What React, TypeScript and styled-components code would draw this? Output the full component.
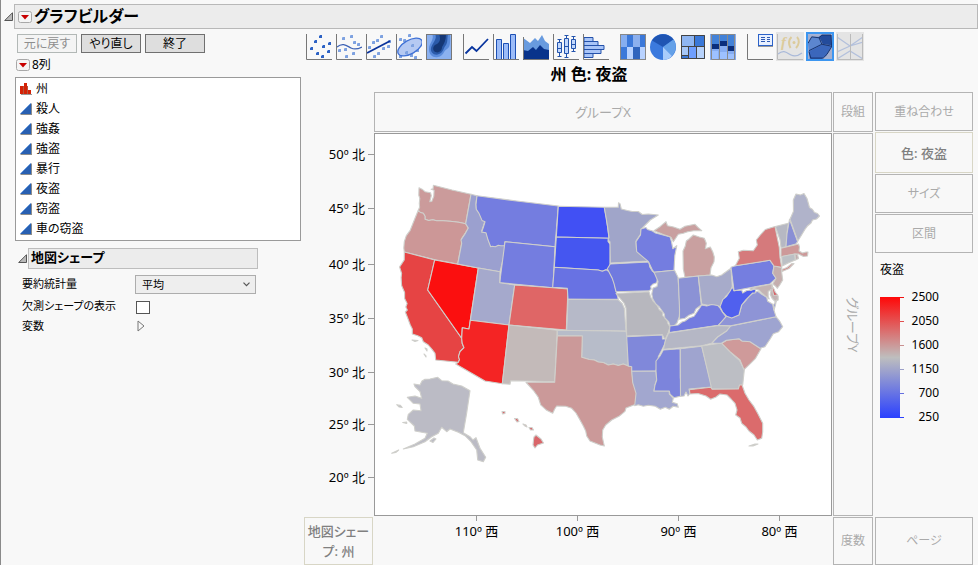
import React from "react";
import styled, { createGlobalStyle, css } from "styled-components";

const GlobalStyle = createGlobalStyle`
  *, *::before, *::after { box-sizing: border-box; }
  body {
    margin: 0;
    background: #f8f8f8;
    color: #000;
    font-family: "Noto Sans", "Noto Sans CJK JP", sans-serif;
    font-size: 12px;
    line-height: 20px;
    font-feature-settings: "palt";
  }
  button, select { font: inherit; color: inherit; font-feature-settings: inherit; }
`;

/* ---------- layout ---------- */

const Page = styled.main`
  display: flex;
  flex-direction: column;
  min-height: 100vh;
  border-left: 1px solid #8a8a8a;
  padding-top: 4px;
`;

const Header = styled.header`
  display: flex;
  align-items: center;
  gap: 1px;
  padding-left: 3px;
`;

const HeaderBar = styled.div`
  flex: 1;
  display: flex;
  align-items: center;
  gap: 2px;
  height: 25px;
  padding-left: 3px;
  background: #ececec;
  border: 1px solid #b8b8b8;
`;

const Heading = styled.h1`
  margin: 0;
  font-size: 16px;
  line-height: 20px;
  padding-bottom: 2px;
  font-weight: 700;
`;

const Body = styled.div`
  flex: 1;
  display: flex;
  gap: 3px;
  padding-right: 5px;
`;

const Sidebar = styled.aside`
  flex: 0 0 300px;
  padding: 5px 0 0 14px;
`;

const Workspace = styled.section`
  flex: 1;
  min-width: 0;
  display: flex;
  flex-direction: column;
  padding-top: 3px;
`;

/* ---------- small controls ---------- */

const IconButton = styled.button`
  display: flex;
  padding: 0;
  border: 0;
  background: none;
`;

const ActionRow = styled.div`
  display: flex;
  gap: 4px;
  padding-left: 2px;
`;

const ActionButton = styled.button`
  width: 60px;
  height: 19px;
  padding: 0;
  line-height: 15px;
  background: #dedede;
  border: 1px solid #707070;
  &:disabled {
    color: #8e8e8e;
    background: #f4f4f4;
    border-color: #b2b8b6;
  }
`;

const ColumnsRow = styled.div`
  display: flex;
  align-items: center;
  gap: 2px;
  height: 24px;
  padding-left: 1px;
`;

const ColumnList = styled.ul`
  list-style: none;
  margin: 0;
  padding: 1px 4px;
  height: 164px;
  width: 286px;
  background: #fff;
  border: 1px solid #9a9a9a;
`;

const ColumnItem = styled.li`
  display: flex;
  align-items: center;
  gap: 4px;
  height: 20px;
`;

const OutlineRow = styled.div`
  display: flex;
  align-items: center;
  gap: 1px;
  margin-top: 7px;
  padding-left: 3px;
`;

const OutlineTitle = styled.h2`
  width: 230px;
  height: 21px;
  margin: 0;
  padding-left: 2px;
  font-size: 13px;
  line-height: 17px;
  font-weight: 700;
  background: #ececec;
  border: 1px solid #bdbdbd;
`;

const Options = styled.div`
  display: grid;
  grid-template-columns: 113px 121px;
  grid-template-rows: 24px 20px 20px;
  align-items: center;
  padding: 3px 0 0 7px;
  font-size: 11px;
`;

const OptionLabel = styled.label`
  line-height: 18px;
`;

const SelectWrap = styled.div`
  display: grid;
  align-items: center;
  & > * { grid-area: 1 / 1; }
  & > svg { justify-self: end; margin-right: 6px; pointer-events: none; }
`;

const Select = styled.select`
  appearance: none;
  width: 100%;
  height: 19px;
  padding: 0 6px;
  line-height: 17px;
  background: #eee;
  border: 1px solid #adadad;
  border-radius: 0;
`;

const Checkbox = styled.input`
  appearance: none;
  width: 14px;
  height: 13px;
  margin: 2px 0 0 1px;
  background: #fff;
  border: 1px solid #555;
`;

const ToggleCell = styled.div`
  padding-left: 2px;
`;

/* ---------- toolbar ---------- */

const Toolbar = styled.div`
  display: flex;
  gap: 9px;
  height: 29px;
  padding-left: 1px;
`;

const ToolGroup = styled.div`
  display: flex;
  gap: 2px;
`;

const ToolButton = styled.button<{ $state?: "on" | "off" }>`
  display: flex;
  align-items: center;
  justify-content: center;
  width: 28px;
  height: 29px;
  padding: 0;
  border: 0;
  background: none;
  ${(p) => p.$state === "off" && css`background: #e4e4e4;`}
  ${(p) => p.$state === "on" && css`
    background: #a9b4d6;
    border: 2px solid #3d96f0;
  `}
`;

/* ---------- graph ---------- */

const GraphGrid = styled.div`
  flex: 1;
  display: grid;
  grid-template-columns: 69px minmax(0, 1fr) 41px 98px;
  grid-template-rows: 30px 40px minmax(380px, 1fr) 48px;
  gap: 1px;
`;

const GraphTitle = styled.h2`
  grid-area: 1 / 1 / 2 / 4;
  margin: 0;
  font-size: 16px;
  line-height: 27px;
  font-weight: 700;
  text-align: center;
`;

const DropZone = styled.div<{ $area?: string; $set?: boolean; $tall?: boolean; $gap?: boolean }>`
  ${(p) => p.$area && css`grid-area: ${p.$area};`}
  display: flex;
  align-items: center;
  justify-content: center;
  min-height: 39px;
  color: #aaa;
  border: 1px solid #b4b4b4;
  text-align: center;
  ${(p) => p.$gap && css`margin-right: 1px;`}
  ${(p) => p.$set && css`
    min-height: 41px;
    color: #808080;
    font-size: 13px;
    font-weight: 500;
    border-color: #d8d6c6;
  `}
  ${(p) => p.$tall && css`
    writing-mode: vertical-rl;
    text-orientation: sideways;
    font-size: 13px;
  `}
`;

const WideZone = styled(DropZone)`
  font-size: 13px;
`;

const YAxis = styled.div`
  grid-area: 3 / 1;
  display: flex;
  flex-direction: column;
  margin-right: -1px;
  font-size: 13px;
`;

const YTick = styled.div<{ $span: number }>`
  flex: ${(p) => p.$span} 0 0;
  display: flex;
  align-items: flex-end;
  justify-content: flex-end;
`;

const YLabel = styled.span`
  display: flex;
  align-items: center;
  gap: 3px;
  &::after { content: ""; width: 6px; height: 1px; background: #999; }
`;

const XAxis = styled.div`
  grid-area: 4 / 2;
  display: flex;
  margin-top: -1px;
  font-size: 13px;
`;

const XTick = styled.div<{ $span: number }>`
  flex: ${(p) => p.$span} 0 0;
  display: flex;
  flex-direction: column;
  align-items: center;
`;

const XLabel = styled.span`
  display: flex;
  flex-direction: column;
  align-items: center;
  &::before { content: ""; width: 1px; height: 5px; background: #999; }
`;

const Plot = styled.div`
  grid-area: 3 / 2;
  display: flex;
  background: #fff;
  border: 1px solid #999;
  & > svg { flex: 1; width: 100%; min-height: 0; }
`;

const SideStack = styled.div`
  grid-area: 2 / 4 / 4 / 5;
  display: flex;
  flex-direction: column;
  gap: 1px;
`;

const Legend = styled.section`
  padding: 6px 0 0 5px;
`;

const LegendTitle = styled.h3`
  margin: 0;
  font-size: 12px;
  font-weight: 400;
`;

const LegendScale = styled.div`
  display: flex;
  padding-top: 5px;
`;

const LegendBar = styled.div`
  width: 20px;
  height: 121px;
  margin-top: 12px;
  background: linear-gradient(#ff0808, #bebebe 50%, #2a40ff);
`;

const LegendLabels = styled.ol`
  list-style: none;
  margin: 0;
  padding: 0;
`;

const LegendLabel = styled.li<{ $color: string }>`
  display: flex;
  align-items: center;
  height: 24px;
  width: 39px;
  justify-content: space-between;
  font-size: 12px;
  &::before { content: ""; width: 4px; height: 1px; background: ${(p) => p.$color}; }
`;

/* ---------- icons ---------- */

const Disclosure = () => (
  <svg width="9" height="9" viewBox="0 0 9 9">
    <path d="M8.500.700v7.800H.700z" fill="#b9b9b9" stroke="#555" />
  </svg>
);

const RedTriangle = () => (
  <svg width="14" height="12" viewBox="0 0 14 12">
    <rect x=".5" y=".5" width="13" height="11" rx="2" fill="#f5f5f5" stroke="#a8a8a8" />
    <path d="M3 4h8L7 8.500z" fill="#c80000" />
  </svg>
);

const NominalIcon = () => (
  <svg width="12" height="12" viewBox="0 0 12 12">
    <path d="M1 11h11v1H1z" fill="#999" />
    <path d="M0 3h3v8H0zM4 0h3v11H4zM8 7h3v4H8z" fill="#d42207" />
    <path d="M3 3h1v8H3zM7 3h1v8H7z" fill="#b5563f" />
  </svg>
);

const ContinuousIcon = () => (
  <svg width="12" height="12" viewBox="0 0 12 12">
    <path d="M12 0v12H0z" fill="#8c8c8c" />
    <path d="M11 0v11H0z" fill="#2860b2" />
    <path d="M.5 10.500L10.500.500" stroke="#6c9ee0" />
  </svg>
);

const Icon = ({ children, axes = false }: { children?: React.ReactNode; axes?: boolean }) => (
  <svg width="26" height="26" viewBox="0 0 26 26" style={undefined}>
    {children}
    {axes && <path d="M.5 0v25.500H26" fill="none" stroke="#777" />}
  </svg>
);

const Dots = ({ at, fill }: { at: number[][]; fill: string }) => (
  <>
    {at.map(([x, y]) => (
      <g key={`${x}-${y}`}>
        <rect x={x - 1} y={y} width="3" height="3" fill={fill} />
        <rect x={x - 1} y={y} width="1" height="1" fill="#9dbbee" />
      </g>
    ))}
  </>
);

const PointsIcon = () => (
  <Icon axes>
    <Dots fill="#2d62c4" at={[[14, 1], [9, 6], [23, 8], [5, 13], [17, 11], [22, 16], [11, 18], [16, 21]]} />
  </Icon>
);

const SmootherIcon = () => (
  <Icon axes>
    <Dots fill="#7fa2e0" at={[[7, 3], [15, 1], [18, 7], [22, 9], [3, 15], [9, 14], [17, 18], [10, 21]]} />
    <path d="M1 13C7 8 11 12 15 14S22 15 26 13" fill="none" stroke="#3c61b4" strokeWidth="1.300" />
  </Icon>
);

const FitLineIcon = () => (
  <Icon axes>
    <Dots fill="#7fa2e0" at={[[15, 1], [11, 5], [7, 7], [23, 6], [3, 12], [22, 11], [17, 13], [12, 18], [8, 21]]} />
    <path d="M1 19L24 7" stroke="#0a339c" strokeWidth="1.800" />
  </Icon>
);

const EllipseIcon = () => (
  <Icon axes>
    <Dots fill="#7fa2e0" at={[[13, 0], [4, 4], [8, 5], [21, 15], [4, 21], [15, 20], [19, 22]]} />
    <ellipse cx="14" cy="13" rx="13.500" ry="6.800" transform="rotate(-30 14 13)" fill="#a9c1f1" fillOpacity=".85" stroke="#3f71d6" strokeWidth="1.300" />
    <Dots fill="#7fa2e0" at={[[16, 10], [10, 17]]} />
  </Icon>
);

const ContourIcon = () => (
  <Icon>
    <rect width="26" height="26" fill="#8bb1f0" />
    <path d="M6 0C9 5 3 9 3 15c0 6 4 9 9 8 6-1 5-6 9-8 4-2 3-9 3-15z" fill="#5a8bdb" />
    <path d="M9 0c3 5-3 9-4 14-1 5 4 8 8 6 5-2 4-6 7-9 2-3 1-7 2-11z" fill="#2b5aa9" />
    <path d="M13 0c2 5 1 8-2 10-3 1-5 4-3 7 3 3 8 1 8-4 2-3 4-7 4-13z" fill="#153775" />
    <rect x=".5" y=".5" width="25" height="25" fill="none" stroke="#777" />
  </Icon>
);

const LineIcon = () => (
  <Icon axes>
    <path d="M2.500 19.500L9 13l4.500 4L25 5" fill="none" stroke="#08349e" strokeWidth="1.800" />
  </Icon>
);

const BarIcon = () => (
  <Icon axes>
    <g fill="#9cbcf8" stroke="#1d50b4">
      <path d="M3.500 25V5.500h5V25M10.500 25V9.500h5V25M17.500 25V.500h5V25" />
    </g>
  </Icon>
);

const AreaIcon = () => (
  <Icon>
    <path d="M0 4l3 2 4 3 5-5 3 3 4-6 3 6 4 3v16H0z" fill="#689bdf" />
    <path d="M0 16l5 1 5-4 3 3 4-5 4 4 5 1v10H0z" fill="#08338b" />
    <path d="M.5 3v22.500H26" fill="none" stroke="#777" />
  </Icon>
);

const BoxPlotIcon = () => (
  <Icon axes>
    <g fill="#c2d8fc" stroke="#2454ad">
      <path d="M6.500 5.500v17M13.500 1.500v22M20.500 2.500v15M4.500 5.500h4M4.500 22.500h4M11.500 1.500h4M11.500 23.500h4M18.500 2.500h4M18.500 17.500h4" />
      <path d="M4.500 8.500h4v10h-4zM11.500 4.500h4v15h-4zM18.500 5.500h4v9h-4zM4.500 14.500h4M11.500 12.500h4M18.500 10.500h4" />
    </g>
  </Icon>
);

const HistogramIcon = () => (
  <Icon axes>
    <path d="M1 3.500h9v4H1zM1 7.500h14v4H1zM1 11.500h20v4H1zM1 15.500h17v4H1zM1 19.500h9v4H1z" fill="#a9c5f8" stroke="#2452ab" />
  </Icon>
);

const HeatmapIcon = () => (
  <Icon>
    <rect width="26" height="26" fill="#8cb0ee" />
    <path d="M7 0h6v13H7zM20 0h6v13h-6zM1 13h6v13H1z" fill="#3b78d9" />
    <path d="M0 0h7v13H0z" fill="#86aef0" />
    <path d="M7 13h6v13H7zM20 13h6v13h-6z" fill="#b8d2ff" />
    <path d="M13 13h7v13h-7z" fill="#2f64bd" />
    <rect x=".5" y=".5" width="25" height="25" fill="none" stroke="#888" />
  </Icon>
);

const PieIcon = () => (
  <Icon>
    <circle cx="13" cy="13" r="13" fill="#3b7ade" />
    <path d="M13 13L2 6.500A13 13 0 0 1 23.500 5.500z" fill="#1f55b3" />
    <path d="M13 13L23.500 5.500A13 13 0 0 1 22 22z" fill="#65a1e8" />
    <path d="M13 13l9 9a13 13 0 0 1-9 4z" fill="#a9ccfb" />
  </Icon>
);

const TreemapIcon = () => (
  <Icon>
    <rect x="1" y="1" width="24" height="24" fill="#3a78d8" />
    <path d="M2 2h13v11H2z" fill="#8fb6f2" />
    <path d="M9 13h8v11H9z" fill="#6f9fff" />
    <path d="M17 13h7v11h-7z" fill="#b7d2fb" />
    <path d="M2 13h6v8H2z" fill="#a7c8f8" />
    <path d="M1.500 1.500h23v23h-23zM14.500 2v10.500M2 12.500h22M8.500 13v11M16.500 13v11M2 21.500h6" fill="none" stroke="#444" />
  </Icon>
);

const MosaicIcon = () => (
  <Icon>
    <rect width="26" height="26" fill="#86adf2" />
    <path d="M1 0h8v11H1zM9 0h8v8H9zM17 0h8v13h-8z" fill="#4382d8" />
    <path d="M1 10h8v5H1zM9 7h8v5H9zM17 12h8v5h-8z" fill="#0a2e7c" />
    <path d="M1 17h7v8H1zM9 18h8v7H9zM17 20h8v5h-8z" fill="#9dc1ff" />
    <path d="M1.500.500h23v25h-23zM9.500 0v26M17.500 0v26" fill="none" stroke="#8a8a8a" />
  </Icon>
);

const CaptionIcon = () => (
  <Icon axes>
    <rect x="11.500" y=".5" width="14" height="11" fill="#e8f0ff" stroke="#2b62c9" />
    <path d="M14 3.500h4M14 5.500h4M14 7.500h4M20 3.500h3M20 5.500h3M20 7.500h3" stroke="#2d59b4" />
    <path d="M11 12.500h15" stroke="#999" />
  </Icon>
);

const FormulaText = styled.text`
  font: italic 700 15px "Liberation Serif", serif;
`;

const FormulaIcon = () => (
  <Icon>
    <FormulaText x="4" y="13" fill="#dccb9b">f</FormulaText>
    <path d="M14.500 3c-3 3-3 7-1 11M20 3c3 3 2 8-1 11" fill="none" stroke="#dccb9b" strokeWidth="2" />
    <circle cx="17" cy="8.500" r="1.500" fill="#dccb9b" />
    <path d="M1 20c6-5 9-1 13 1s7 1 11-2" fill="none" stroke="#a9b9d9" strokeWidth="1.300" />
    <path d="M.5 0v25.500H26" fill="none" stroke="#bbb" />
  </Icon>
);

const MapShapesIcon = () => (
  <Icon>
    <rect width="26" height="26" fill="#a5b0d0" />
    <path d="M0 9l4-7h9l2 9-14 8z" fill="#5c86cf" />
    <path d="M12 2l3-2h10l1 11-10-1z" fill="#234b9b" />
    <path d="M1 18l15-8 10 2-6 10-5 4H2z" fill="#3b67bc" />
    <path d="M0 9l4-7 8 1 3-3h10l.500 13-5 8-4 4H3l-2-7M12 3l3 7 10 2M15 10L1 17" fill="none" stroke="#142e66" />
  </Icon>
);

const ParallelIcon = () => (
  <Icon>
    <path d="M0 3l13 9L26 3M0 18l13-6 13-4M0 25l13-8 13 8" fill="none" stroke="#b3c0dc" strokeWidth="1.300" />
    <path d="M.5 0v25.500h25V0M13.500 0v25" fill="none" stroke="#bbb" />
  </Icon>
);

const ChevronDown = () => (
  <svg width="7" height="5" viewBox="0 0 7 5">
    <path d="M.5.700l3 3 3-3" fill="none" stroke="#555" strokeWidth="1.200" />
  </svg>
);

const ClosedDisclosure = () => (
  <svg width="8" height="12" viewBox="0 0 8 12">
    <path d="M1 1v10l6-5z" fill="#f8f8f8" stroke="#777" />
  </svg>
);

/* ---------- map ---------- */

type Shape = { name: string; fill: string; d: string };

const states: Shape[] = [
  { name: "ワシントン", fill: "#cb9b9b", d: "M419 187.700l3 1.500 3 2.500 5.500 1 .8 3-1.500 6 2-.5 2-5 .3-6-3-1 2-.5.300-3.400L452 190l19 4.300-5.300 29.400-7-1.500-8.700-.9-7-.6-6.300 0-4-1-4 .8-3.700-1.200 0-3-1.700-3-3-.8-2-2.200 1.300-3-.3-4 .5-5-1-3z" },
  { name: "オレゴン", fill: "#cc9797", d: "M418.300 210.300l2 2.200 3 .8 1.700 3 0 3 3.700 1.200 4-.8 4 1 6.300 0 7 .6 8.700.9 7 1.500 2.600 4.300-3 5-4 6 .4 4.300-4 20.700L435 259.700 404.300 252l-.5-4 .5-6.300 2-6 3.700-5 5-12.400z" },
  { name: "カリフォルニア", fill: "#e64444", d: "M404.300 252l30.400 8-7 30 34 48.300.5 5 1.800 4.400-4 4-1.500 5 1 3-1.200 2.600-22.600-2.300-.7-6.700-3-4-3.700-4.300-5-3.300-1.600-4-4-2-5.400-1.700 0-5-2-4-3-8-2-5 2-2-1.500-3 1.300-3.500-2.500-5 0-6-3-7-.5-8 .5-4-2-6.600 2-3 2.600-4z" },
  { name: "ネバダ", fill: "#fb0f0f", d: "M434.700 260l43.600 8-9.300 61-6.700-1.300-.6 10.600L427.700 290z" },
  { name: "アイダホ", fill: "#9ba0cf", d: "M471 194.300l6 1.400-1 7.600.3 5 2.700 4 3 7 3 1.400-1.500 5-1.800 5.300 4.300.7 2 7 2.700 7 4-.9 3 .5 3-2 2.600.4 3.700 0L500 271.700l-21.700-3.700-20.600-4 4-20.700-.7-3.300 4-6 3.300-6-2.600-4.300z" },
  { name: "モンタナ", fill: "#747de0", d: "M477 195.700l39.700 5.300 41.600 5-3.300 40.700-50-5-.7 4-3.300 0-2.700-.4-3 1.500-3-.5-1.600.5-2.700-7-2-7-4.300-.7 1.800-5.300 1.500-5-3-1.400-3-7-2.700-4-.3-5z" },
  { name: "ワイオミング", fill: "#747de0", d: "M505 241.700l50 5-2 41-53.300-5z" },
  { name: "ユタ", fill: "#a5a9cc", d: "M478.300 268l21.700 3.700-.3 11 15 2.300-5.700 40-38.700-4.700z" },
  { name: "アリゾナ", fill: "#f42424", d: "M470.300 320.300L509 325l-6.700 58.700L485 381l-29.300-17 2.600-1.700 1.200-2.600-1-3 1.500-5 4-4-1.800-4.400-.5-5 .6-10.600 6.700 1.300z" },
  { name: "コロラド", fill: "#df6666", d: "M514.700 285l38.300 2.700 15 1.300-1.700 41-57.300-5z" },
  { name: "ニューメキシコ", fill: "#c3bab9", d: "M509 325l48.300 5.300-2.600 51.400-28.700-.7-15.300-.3-.7 3.600-7.700-.6z" },
  { name: "ノースダコタ", fill: "#4150f4", d: "M558.300 206.300l46 1 2 10 1.500 11 1.200 10-52.700-1.300z" },
  { name: "サウスダコタ", fill: "#4556f0", d: "M556.300 237l52.700 1.300-1 3 2.300 3-.3 20-1 7.400-3-2-4 1.500-4-1.200-43.700-2.700z" },
  { name: "ネブラスカ", fill: "#6872e3", d: "M554.300 267.300L598.300 270l4 1.200 4-1.500 3 2 2.400 5 2.300 5 1.500 7 2.800 10.600-50.300-.3-.7-10.700-14.600-1z" },
  { name: "カンザス", fill: "#b6b9c8", d: "M568 299.300l50.300.5 3.700 3.500 2.300 5 1.700 22.700-59.300-.7z" },
  { name: "オクラホマ", fill: "#b7bcc9", d: "M557.300 330.300l68.700.9 1.700 9 .6 25.800-5-2-5 1.500-5-1.500-5 1-5-2.500-5-.5-4-2-5-.5-7.600-2.200.6-21.300-25-.3z" },
  { name: "テキサス", fill: "#cb9999", d: "M557.300 335.700l25 .3-.6 21.300 7.600 2.200 5 .5 4 2 5 .5 5 2.500 5-1 5 1.500 5-1.500 5 2 3.400.7 1 13.300 2 6 2.300 7-1 5-.3 6.300-9.700 3.700-1 3.300-6 5-7.300 3.700-6 5-3 5-.4 7 2 9-4.300-1-10-4-3.300-5-1-5-2.400-5-3.300-6-4-7-4.300-4.700-6-2-9-.3-2 3-2 4.300-6-3-6-5.400-2.400-7.600-5-7-7.300-8 28.700 0z" },
  { name: "ミネソタ", fill: "#a0a5c9", d: "M604.300 207.300l14 0 .2-4.600 1.500 1 1.300 5.300 6 1.500 5 1 6 0 4 3 6-.5 10 1-8 5-5 5-4.300 4.300-.5 5-4.500 6.700.7 10 6 4 5.600 6-38 2-.3-21-2-2 1-2.700-1.500-11z" },
  { name: "アイオワ", fill: "#707adf", d: "M610.300 264l38.500-2 1 5 2.500 4 3 2 2.400 4.700-1 5-4 1.600-2 2 .5 3-2.200 1.600-33 .8-2-8-2-6-4.700-9z" },
  { name: "ミズーリ", fill: "#b7b7be", d: "M616 293.500l33-1.800 1.500 5 3 5 3.500 3 2.300 5 3 2 .5 4 4 4 1.200 4 2 3-1.700 6-3.300 7-2.700-5-35.600 1.300-.7-28-2-5z" },
  { name: "アーカンソー", fill: "#8088da", d: "M626.700 336.700l35.600-1.700 .2 4 3.800 0-2 6-3 6-3 5.700 0 5-2.300 9.300-24.300.3 0-4.600-3.400-.7z" },
  { name: "ルイジアナ", fill: "#a2a7cf", d: "M631.700 371.300l24.300-.3.700 9-1.700 5-1 6 15.300 0 0 3 4 4.300-1 4 5 1.500 1 3.500-5-1-4 3-4-2-5 2-5-3-7-1-5 1-5-1.500-3.600.9 1.300-12.400-3.300-10.600z" },
  { name: "ウィスコンシン", fill: "#747de0", d: "M641 229l5-1.500 1.500 2 5 1.500 3 2 9.500 2.500 5 1.200 1.500 5 1.300 7 4-3-2 10-.8 14.600L654 272.300l-2-3-3.500-7.600-6-5-5.800-5-.7-10 4.500-6.700z" },
  { name: "ミシガン", fill: "#c9a0a0", d: "M654 230.700l6-4 6-5 1.500 4 6 1.300 6.500 2.300 5-3 10-2 3 3 3.700 3.400-8 0-6 1-4.400 1.600-5 1-5 7.400-2-4-1.300-1-6-2z M693.300 235l6 2 5 1.300 2 5-1 5.500 5-1.800 2.500 5 1.500 5-.3 4.700-3 6-1 7.300-25 2.300-1.700-8.300-.3-18 2.300-5 1-5 2.700-2z" },
  { name: "イリノイ", fill: "#9aa0d0", d: "M654 272.300l20.500-2 3.500 7 2 31-.7 8.400-2.300 6.300-3 3-4 0-1.200-4-4-4-.5-4-5-7-3.500-3-3-5-1-5 1.200-6 4-1.600 1-5z" },
  { name: "インディアナ", fill: "#8b92d5", d: "M678.300 278.300l20-2.300 3 29-5.300 4-2 4.300-5 2-4 3-5.500 1 0-11z" },
  { name: "オハイオ", fill: "#a7abca", d: "M698.300 276l13.400-1 5 1.700 5-1.700 9.300-6.700 1.300 18.400-2 5-5 5-1.300 5-3.300 5-3.300-1-5.700-1-3.500.5-4.500-.7-2-.6z" },
  { name: "ケンタッキー", fill: "#737be0", d: "M701.700 305l5 1 5-1.500 6 1 2.600 3 2.400 4 3.300 4.200-4 5-3.700 3.600-49 7.200 .7-6.500 8-1 4-3 3-1 4-3 5-1.700z" },
  { name: "テネシー", fill: "#b5b7c5", d: "M668.500 333l50-7.500 12.200.5-4 5-9 6-6 6.300-10 2.500-38.300 3.500 2-9z" },
  { name: "ミシシッピ", fill: "#7c84dc", d: "M663.300 350l17-1.300 0 29 2 18-8.300 2-4-3.500-.7-3.200-15.300 0 1-6 1.700-5-.7-9 0-10 4-5z" },
  { name: "アラバマ", fill: "#9fa4cf", d: "M680.300 348.700l21.400-2.500 8 32 2 8.800-22.700 2 1 4.500-2 2.500-2-4-2 4-3.500.2z" },
  { name: "ジョージア", fill: "#bcbec4", d: "M701.700 346l20-3 8 8.700 10 9 4.600 9.300-1.600 15-2 0-2.400 4-26.600 0-2.400-10.700z" },
  { name: "サウスカロライナ", fill: "#cf9a9a", d: "M721.700 343.300l5-3 12.600-1.600 3 2.300 8 .5 10.700 7.200-5.700 10-5 5-6.300 6-4-9.700-10-8.300z" },
  { name: "ノースカロライナ", fill: "#9ea4d0", d: "M730.700 326l45.300-9.300 4 5 2.700 5-4 5-5.400 2-3 5-5.300 8-5 1.600-10-6.600-8-.7-3-2.300-12.600 1.600-5 3-9.700 0 6-6.300 9-6z" },
  { name: "バージニア", fill: "#8e94d6", d: "M752.700 293.300l5-2 4 3 5 3 1 4 5 3 1 5 2.300 7.400-45.300 9-12.400-.3 8.400-9.400 5 1.700 7.300-3 2.700-10 4-4 4-5.500z" },
  { name: "ウェストバージニア", fill: "#5060ee", d: "M732.300 286.700l1.700 4 7.700-.7 1 3 4-2.500 5-.5 4-1-.5 4-2.500 0-2.700 2.700-4 4-4.300 5.300-2.700 10-7.300 3-5-1.700-4-4.300-2.700-5.300 2.700-7 3.600-3 4-6z" },
  { name: "フロリダ", fill: "#db6b6c", d: "M689.300 389.700L710.700 387.200 712.300 389.300 738.300 389 739.500 385 742 384.700 745 393.300 749 400 754 406.700 758 414 762.700 423.300 762.700 432 761.700 438.300 757.300 440 754 435 749 431 746 427 741.700 423.300 740 418 735.700 415 737 410 735 403.300 731 399 727 395 720 394 716 397 710.700 399.300 706 396 698 393.500 690 394z" },
  { name: "ペンシルベニア", fill: "#757ee0", d: "M731 267.300l4.300-1.600 34.700-5.400 4 5.700-1.300 7.300 3.300 5-6 5.700-36 6.700z" },
  { name: "メリーランド", fill: "#c3b4b4", d: "M750 288.300l21.700-4.300 1 3 3.500 8 2 1 0 4-3 1.500-3-3-2-4 1-5-3 2 0 5 1 2.500-4-3-3.500-3-3-3-5-1.500-3 2z" },
  { name: "デラウェア", fill: "#d75f65", d: "M771.700 286l2 2.500 1.500 3.500 2.500 3-4 .5z" },
  { name: "バージニア東岸", fill: "#8e94d6", d: "M776.500 300l-1 5-1.500 5-.5-5z" },
  { name: "ニュージャージー", fill: "#c4aeae", d: "M774 266l7.700 1.500 0 5 1 7.500-3 5-2.300 3.300-2-2.300-2.700-2 3.300-5.700-3.300-5z" },
  { name: "ニューヨーク", fill: "#d57a7c", d: "M735.300 265.700l4-7.400-1-6.600 5-1.500 10 .5 4-5.700-1-5 4-5 5-5.500 9.700-3 2 10 2.300 11 .7 10 1.700 9.800-7.700-1.300-4-5.700z M782 269.500l5-2 5-4 2 0-5 5-7 3z" },
  { name: "バーモント", fill: "#b6b8c3", d: "M775.300 226.500l13-3.200-1 8-1.300 15.400-5 1-1-8z" },
  { name: "ニューハンプシャー", fill: "#898fd5", d: "M789.500 219.300l8.200 22.400-2 2.300-9.700 2.700 1-13z" },
  { name: "メイン", fill: "#b0b3ca", d: "M790 219.300l3.500-8-.2-11.300 2.700-6 4.500 1 3.500-1.500 3 5 2.500 9 3 2 2 3 3 1 2 2.500-3 3-4 1-1.500 3-3.300 2.700-3 4-3 5-3.900 6.300z" },
  { name: "マサチューセッツ", fill: "#cd9999", d: "M781 248.300l14.500-3.500 3-.8 1 3-.5 4 3.500 2 3.500-1 2 0-.5 4-4 .5-5-2.500-3 0-14.500 2.700z" },
  { name: "コネチカット", fill: "#bcc0c5", d: "M781.700 256.500l13-2.500.5 6-7 3-6 3z" },
  { name: "ロードアイランド", fill: "#c1adb0", d: "M795 254l2.500.5 1 4-3 1.500z" },
  { name: "アラスカ", fill: "#bbbbc5", d: "M414 384L420 385 422 381 425 379.300 430 379 437.700 377.300 441.700 380.700 448 381 453 384 461.700 386 470 390.700 466.700 413 463.300 432.700 470 436.700 473 440 476 437.700 480 448.300 485.700 457.300 483.300 461.700 477.700 460 476.700 450 471 441.700 465 435.700 458.300 432.300 450 429 446.700 431.700 441.700 427.300 438.300 433.300 431.700 436.700 425 441.700 413.300 446.700 403.300 449 415 444 425 438.300 427.300 433.300 415 431 414.300 426 407.300 419.300 408.300 414.300 413.300 410 421 410.700 420 404 413.300 403.300 407.300 397.300 415 396 421.700 398.300 420 391.700 415 386.700z M396.700 404.700l3.500.5 2 2.300-3-.5z M402.700 422.500l4-.5 0 1.500z M430 441l4-3 2 1-3 3.500z M391.700 453.300l7-3.300-3 2.500z" },
  { name: "ハワイ", fill: "#d9666a", d: "M502 411.500l3 0 0 2-2.500.500z M514.500 418.500l3 0 1.500 3-2 .5z M523 424l3 1 1 2-2-1z M529 427.500l3 0 1.500 2.500-3 0z M534 437l2-2 5 4 2.500 4-6 2-2.500 3-2-3 .5-5z" },
  { name: "離島", fill: "#c4c4c4", d: "M412 340l6 .5-3 1z M425 348l2 1 0 2z M424 354l2 2 0 1z M749 446l6-2 3 0-5 2z" },
];

const UsMap = () => (
  <svg viewBox="375 134 456 381" role="img" aria-label="州別の夜盗">
    <g stroke="#cfcfcb" strokeWidth="1.100" strokeLinejoin="round">
      {states.map((s) => (
        <path key={s.name} d={s.d} fill={s.fill} />
      ))}
    </g>
  </svg>
);

/* ---------- data ---------- */

const columns = ["州", "殺人", "強姦", "強盗", "暴行", "夜盗", "窃盗", "車の窃盗"];

type Tool = { label: string; icon: React.ReactNode; state?: "on" | "off" };

const toolGroups: Tool[][] = [
  [
    { label: "点", icon: <PointsIcon /> },
    { label: "平滑線", icon: <SmootherIcon /> },
    { label: "回帰直線", icon: <FitLineIcon /> },
    { label: "楕円", icon: <EllipseIcon /> },
    { label: "等高線", icon: <ContourIcon /> },
  ],
  [
    { label: "折れ線", icon: <LineIcon /> },
    { label: "棒", icon: <BarIcon /> },
    { label: "面積", icon: <AreaIcon /> },
    { label: "箱ひげ図", icon: <BoxPlotIcon /> },
    { label: "ヒストグラム", icon: <HistogramIcon /> },
  ],
  [
    { label: "ヒートマップ", icon: <HeatmapIcon /> },
    { label: "円", icon: <PieIcon /> },
    { label: "ツリーマップ", icon: <TreemapIcon /> },
    { label: "モザイク", icon: <MosaicIcon /> },
  ],
  [
    { label: "キャプション", icon: <CaptionIcon /> },
    { label: "計算式", icon: <FormulaIcon />, state: "off" },
    { label: "地図シェープ", icon: <MapShapesIcon />, state: "on" },
    { label: "パラレル", icon: <ParallelIcon />, state: "off" },
  ],
];

const latitudes = [
  { text: "50º 北", span: 31 },
  { text: "45º 北", span: 54 },
  { text: "40º 北", span: 56 },
  { text: "35º 北", span: 54 },
  { text: "30º 北", span: 54 },
  { text: "25º 北", span: 52 },
  { text: "20º 北", span: 53 },
];

const longitudes = [
  { text: "110º 西", span: 101 },
  { text: "100º 西", span: 101 },
  { text: "90º 西", span: 101 },
  { text: "80º 西", span: 101 },
];

const legend = [
  { value: 2500, color: "#f01010" },
  { value: 2050, color: "#e25050" },
  { value: 1600, color: "#c99090" },
  { value: 1150, color: "#9ca0c8" },
  { value: 700, color: "#6570e0" },
  { value: 250, color: "#2a40ff" },
];

export default function App() {
  return (
    <>
      <GlobalStyle />
      <Page>
        <Header>
          <IconButton aria-label="開閉"><Disclosure /></IconButton>
          <HeaderBar>
            <IconButton aria-label="グラフビルダーのメニュー"><RedTriangle /></IconButton>
            <Heading>グラフビルダー</Heading>
          </HeaderBar>
        </Header>
        <Body>
          <Sidebar>
            <ActionRow>
              <ActionButton disabled>元に戻す</ActionButton>
              <ActionButton>やり直し</ActionButton>
              <ActionButton>終了</ActionButton>
            </ActionRow>
            <ColumnsRow>
              <IconButton aria-label="列のメニュー"><RedTriangle /></IconButton>
              <span>8列</span>
            </ColumnsRow>
            <ColumnList>
              {columns.map((name, i) => (
                <ColumnItem key={name}>
                  {i === 0 ? <NominalIcon /> : <ContinuousIcon />}
                  {name}
                </ColumnItem>
              ))}
            </ColumnList>
            <OutlineRow>
              <IconButton aria-label="開閉"><Disclosure /></IconButton>
              <OutlineTitle>地図シェープ</OutlineTitle>
            </OutlineRow>
            <Options>
              <OptionLabel htmlFor="stat">要約統計量</OptionLabel>
              <SelectWrap>
                <Select id="stat" defaultValue="平均">
                  <option>平均</option>
                </Select>
                <ChevronDown />
              </SelectWrap>
              <OptionLabel htmlFor="missing">欠測シェープの表示</OptionLabel>
              <Checkbox type="checkbox" id="missing" />
              <OptionLabel htmlFor="vars">変数</OptionLabel>
              <ToggleCell>
                <IconButton id="vars"><ClosedDisclosure /></IconButton>
              </ToggleCell>
            </Options>
          </Sidebar>
          <Workspace>
            <Toolbar>
              {toolGroups.map((group) => (
                <ToolGroup key={group[0].label}>
                  {group.map((tool) => (
                    <ToolButton key={tool.label} aria-label={tool.label} $state={tool.state}>
                      {tool.icon}
                    </ToolButton>
                  ))}
                </ToolGroup>
              ))}
            </Toolbar>
            <GraphGrid>
              <GraphTitle>州 色: 夜盗</GraphTitle>
              <WideZone $area="2 / 2">グループX</WideZone>
              <DropZone $area="2 / 3" $gap>段組</DropZone>
              <YAxis>
                {latitudes.map((t) => (
                  <YTick key={t.text} $span={t.span}><YLabel>{t.text}</YLabel></YTick>
                ))}
                <YTick $span={29} />
              </YAxis>
              <Plot><UsMap /></Plot>
              <DropZone $area="3 / 3" $tall $gap>グループY</DropZone>
              <SideStack>
                <DropZone>重ね合わせ</DropZone>
                <DropZone $set>色: 夜盗</DropZone>
                <DropZone>サイズ</DropZone>
                <DropZone>区間</DropZone>
                <Legend>
                  <LegendTitle>夜盗</LegendTitle>
                  <LegendScale>
                    <LegendBar />
                    <LegendLabels>
                      {legend.map((l) => (
                        <LegendLabel key={l.value} $color={l.color}>{l.value}</LegendLabel>
                      ))}
                    </LegendLabels>
                  </LegendScale>
                </Legend>
              </SideStack>
              <DropZone $area="4 / 1" $set>地図シェー<br />プ: 州</DropZone>
              <XAxis>
                <XTick $span={52} />
                {longitudes.map((t) => (
                  <XTick key={t.text} $span={t.span}><XLabel>{t.text}</XLabel></XTick>
                ))}
                <XTick $span={2} />
              </XAxis>
              <DropZone $area="4 / 3" $gap>度数</DropZone>
              <DropZone $area="4 / 4">ページ</DropZone>
            </GraphGrid>
          </Workspace>
        </Body>
      </Page>
    </>
  );
}
